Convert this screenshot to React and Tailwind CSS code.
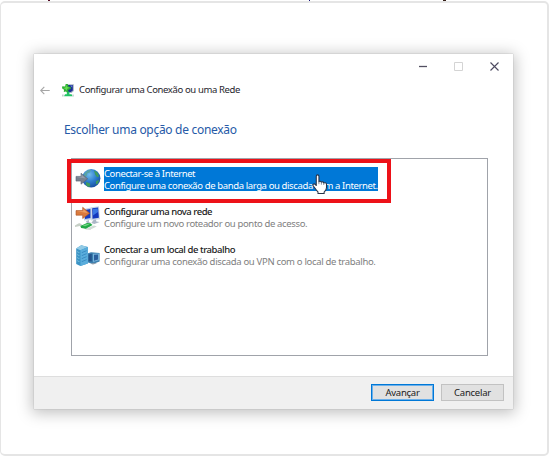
import React from "react";

function BackArrow() {
  return (
    <svg width="10" height="9" viewBox="0 0 10 9" fill="none" stroke="#a6a6a6" strokeWidth="1.1">
      <path d="M9.7 4.5H.8M4.3.8.7 4.5l3.6 3.7" />
    </svg>
  );
}

function WizardIcon() {
  return (
    <svg width="12" height="13" viewBox="0 0 12 13">
      <path d="M4 .2h7.8v6.9L9.5 9H5z" fill="#a9b4c4" />
      <path d="M5 1h5.8v5.6L8.8 8H5.6z" fill="#1d2f96" />
      <path d="M8 1.5h2.2v2z" fill="#6d8bda" />
      <path d="M4.8 7.5h2.6v2.8h2.2l1 2H2l1-2h1.8z" fill="#22c365" />
      <path d="M0 10.6h1.7v2H0zM10.4 10.6h1.3l.3 2h-1.6z" fill="#c5ccd0" />
      <path d="M3.7 0h2.1l.7 2.5 2.3.5v2L6.5 5.7 5.8 8.4l-2-1-2 .7.2-2.4L0 4.2l.3-2 2.8.2z" fill="#2fae35" />
      <path d="m4.2.8.8 2.2 2.8.7-2.6 1.1-.7 2-1.1-1.7-2.2-1 2.3-.7z" fill="#66df54" />
    </svg>
  );
}

function GlobeIcon() {
  return (
    <svg width="26" height="24" viewBox="0 0 26 24">
      <defs>
        <radialGradient id="sea" cx=".4" cy=".3" r=".75">
          <stop offset="0" stopColor="#72bcea" />
          <stop offset=".5" stopColor="#2f7fd0" />
          <stop offset="1" stopColor="#164a9c" />
        </radialGradient>
      </defs>
      <circle cx="16.2" cy="11.3" r="9.2" fill="url(#sea)" />
      <path d="M9.5 6.5c2-3 4-3.8 6.5-3.5l-1.2 2.5-2.4.7-.6 2.6L10 10 8.6 9z" fill="#58a3a4" />
      <path d="M19 3.5l3 1.6 2.2 4.2-2.2 1-1.8-2.6zM11 15l3.6 1.2.8 2-1.4 2-2.8-1.6zM21 14l3.3-1-1.4 3.6-2 1z" fill="#3e9c5f" />
      <path d="M1 9.4h5V6.2l6.7 5.6L6 17.2v-3.1H1z" fill="#77818f" stroke="#586577" strokeWidth=".6" />
      <path d="M1.4 10h5V7.6l4.3 3.8z" fill="#939dab" />
    </svg>
  );
}

function NewNetworkIcon() {
  return (
    <svg width="26" height="25" viewBox="0 0 26 25">
      <path d="m9 3 7-1.5v12L9 14.5z" fill="#c0d1e7" />
      <path d="m10 4 5.4-1.1v9.2L10 13z" fill="#153dc1" />
      <path d="m16 1.2 8-.9 1 13-8.8 1.3z" fill="#c8d6e6" />
      <path d="m17.2 2.2 5.9-.6.8 10.2-6.4 1z" fill="#1237bd" />
      <path d="m18 3 4.7-.5.3 3.4-5 3.6z" fill="#3976e4" />
      <path d="m18.5 14 2.5-.4.3 1.8 3.4.7-5.4 1.9-3-1zM11 15l3-1v2l2 .6-4 1z" fill="#adb8c7" />
      <path d="M1 4.6h6.7V1.3l7 6-7 5.2V9.2H1z" fill="#d97a3d" stroke="#a95125" strokeWidth=".6" />
      <path d="M1.6 5.3h6.7V3.1l4.4 3.8z" fill="#eda068" />
      <path d="M0 19.4c4-2.4 5-2.5 6-1.5l6 4 4-.1v1.6H11l-6-3.5-5 1.2z" fill="#c6cfc6" />
      <path d="m5.4 20 6.5-3 3.6.2 2 1.8-6.4 3.7-5-.8z" fill="#22a947" />
      <path d="m7.5 19.6 4.6-1.7 2.6.4-4.6 2z" fill="#72d783" />
      <path d="m11 22.5 8-3 2.8 1-7.3 3.5z" fill="#d1dbd5" />
    </svg>
  );
}

function WorkplaceIcon() {
  return (
    <svg width="26" height="24" viewBox="0 0 26 24">
      <path d="m1.2 4.5 5-3.2 6.6 1.7v16.4L5.3 22 1.2 20z" fill="#3b94c6" />
      <path d="m1.2 4.5 5-3.2 6.6 1.7-7.3 3.2z" fill="#92cbe6" />
      <path d="M5.5 6.2V22l7.3-2.6V3z" fill="#5aaddc" />
      <path d="m6.8 8.2 4.8-2v.7L6.8 9zm0 3 4.8-1.9v.8L6.8 12zm0 3 4.8-1.9v.8L6.8 15zm0 3 4.8-1.9v.8L6.8 18z" fill="#2f83bc" />
      <path d="m2 7.2 2.4 1v.7L2 8zm0 3 2.4 1v.7L2 11zm0 3 2.4 1v.7L2 14zm0 3 2.4 1v.7L2 17z" fill="#86c5de" />
      <path d="m13 9.3 3-1 8.6.7v8.6L17.8 20 13 18.4z" fill="#3b7fae" />
      <path d="m13.6 10.4 3.2-.6v7.8l-3.2-.4z" fill="#23548c" />
      <path d="m18 9.8 5.9-.2v6.7L18 18z" fill="#78b4dc" />
      <path d="m19 10.7 4-.2v5l-4 1.2z" fill="#2b5f9d" />
      <path d="m15.5 19.8 3-1 3.5.4-4 1.3z" fill="#8c9cab" />
    </svg>
  );
}

function HandCursor() {
  return (
    <svg className="absolute left-[312px] top-[174px]" width="16" height="21" viewBox="0 0 15 19.7">
      <path d="M4 2.1C4 .4 6.5.4 6.5 2.1v5.2c.3-.9 2.1-.7 2.3.5.5-.8 2-.5 2.2.7.7-.7 2.5-.3 2.6 1v3.2c0 2.5-1.7 3.4-2.2 4.2v1.4H5.6v-1.5C4 15.2 2.4 12.6 1 10.8c-.6-1 .8-2.1 1.8-1.2L4 10.8z" fill="#fff" stroke="#273247" strokeWidth="1" strokeLinejoin="round" />
      <path d="M6.5 7v2.6M8.8 8v2M11 8.7v1.6" stroke="#596779" strokeWidth=".7" />
    </svg>
  );
}

const options = [
  { icon: <GlobeIcon />, title: "Conectar-se à Internet", text: "Configure uma conexão de banda larga ou discada com a Internet.", titleTracking: "tracking-[-0.4px]", textTracking: "tracking-[-0.38px]", selected: true },
  { icon: <NewNetworkIcon />, title: "Configurar uma nova rede", text: "Configure um novo roteador ou ponto de acesso.", titleTracking: "tracking-[-0.47px]", textTracking: "tracking-[-0.35px]" },
  { icon: <WorkplaceIcon />, title: "Conectar a um local de trabalho", text: "Configurar uma conexão discada ou VPN com o local de trabalho.", titleTracking: "tracking-[-0.44px]", textTracking: "tracking-[-0.32px]" },
];

function Option({ icon, title, text, titleTracking, textTracking, selected }) {
  return (
    <li className="flex h-[38.5px] items-start">
      <span className="flex w-[29px] shrink-0">{icon}</span>
      <div className={selected ? "h-[24px] w-[274px] bg-[#0078d7] pt-px text-white" : "h-[24px] text-[#202020]"}>
        <p className={`h-[12px] whitespace-nowrap text-[9.5px] leading-[12px] ${selected ? "" : "font-medium"} ${titleTracking}`}>{title}</p>
        <p className={`h-[12px] whitespace-nowrap text-[9.5px] leading-[12px] ${textTracking} ${selected ? "text-white" : "text-[#808080]"}`}>{text}</p>
      </div>
    </li>
  );
}

export default function App() {
  return (
    <main className="relative h-[456px] w-[550px] overflow-hidden bg-white pt-px font-['Noto_Sans','Open_Sans',sans-serif]">
      <i className="absolute left-[48px] top-0 h-px w-[2px] bg-[#530b25]" />
      <i className="absolute left-[309px] top-0 h-px w-px bg-[#16137c]" />
      <i className="absolute left-[443px] top-0 h-px w-[3px] bg-[#352018]" />
      <div className="h-[455px] w-[549px] rounded-[5px] border-2 border-l border-[#e5e5e5] pl-[33px] pt-[51px]">
        <section className="flex h-[355px] w-[479px] flex-col bg-white shadow-[0_0_1px_#999,0_2px_14px_2px_rgba(0,0,0,0.25)]">
          <header className="flex h-[24px] items-center justify-end gap-[27px] pr-[14px]">
            <svg width="8" height="9" viewBox="0 0 8 9"><path d="M0 4.5h8" stroke="#535062" strokeWidth="1.3" /></svg>
            <svg width="9" height="9" viewBox="0 0 9 9"><path d="M.5.5h8v8h-8z" fill="none" stroke="#d4d4d4" /></svg>
            <svg width="9" height="9" viewBox="0 0 9 9"><path d="m.5.5 8 8m0-8-8 8" stroke="#4d4a60" strokeWidth="1.1" /></svg>
          </header>
          <div className="flex h-[24px] items-center pl-[6px]">
            <BackArrow />
            <span className="ml-3"><WizardIcon /></span>
            <h1 className="ml-[5px] whitespace-nowrap text-[9.5px] leading-[12px] tracking-[-0.37px] text-[#25252c]">Configurar uma Conexão ou uma Rede</h1>
          </div>
          <h2 className="mt-[19px] whitespace-nowrap pl-[30px] text-[12px] leading-[18px] tracking-[-0.3px] text-[#265aa7]">Escolher uma opção de conexão</h2>
          <ul className="ml-[37px] mt-[19px] h-[198px] w-[417px] border border-[#a0a3aa] pl-[3px] pt-[8px]">
            {options.map((option) => <Option key={option.title} {...option} />)}
          </ul>
          <footer className="mt-auto flex h-[33px] items-start justify-end gap-[7px] border-t border-[#dedede] bg-[#f0f0f0] pr-[9px] pt-[7px] text-[9.5px] leading-[12px] tracking-[-0.25px] text-[#202020]">
            <button className="flex h-[17px] w-[63px] items-center justify-center border border-[#0078d7] bg-[#e1e1e1] shadow-[inset_0_0_0_1px_#6cb0ea]">Avançar</button>
            <button className="flex h-[17px] w-[63px] items-center justify-center border border-[#c2c2c2] bg-[#e1e1e1]">Cancelar</button>
          </footer>
        </section>
      </div>
      <div className="absolute left-[67px] top-[159px] h-[44px] w-[324px] border-4 border-[#ed1118]" />
      <HandCursor />
    </main>
  );
}
